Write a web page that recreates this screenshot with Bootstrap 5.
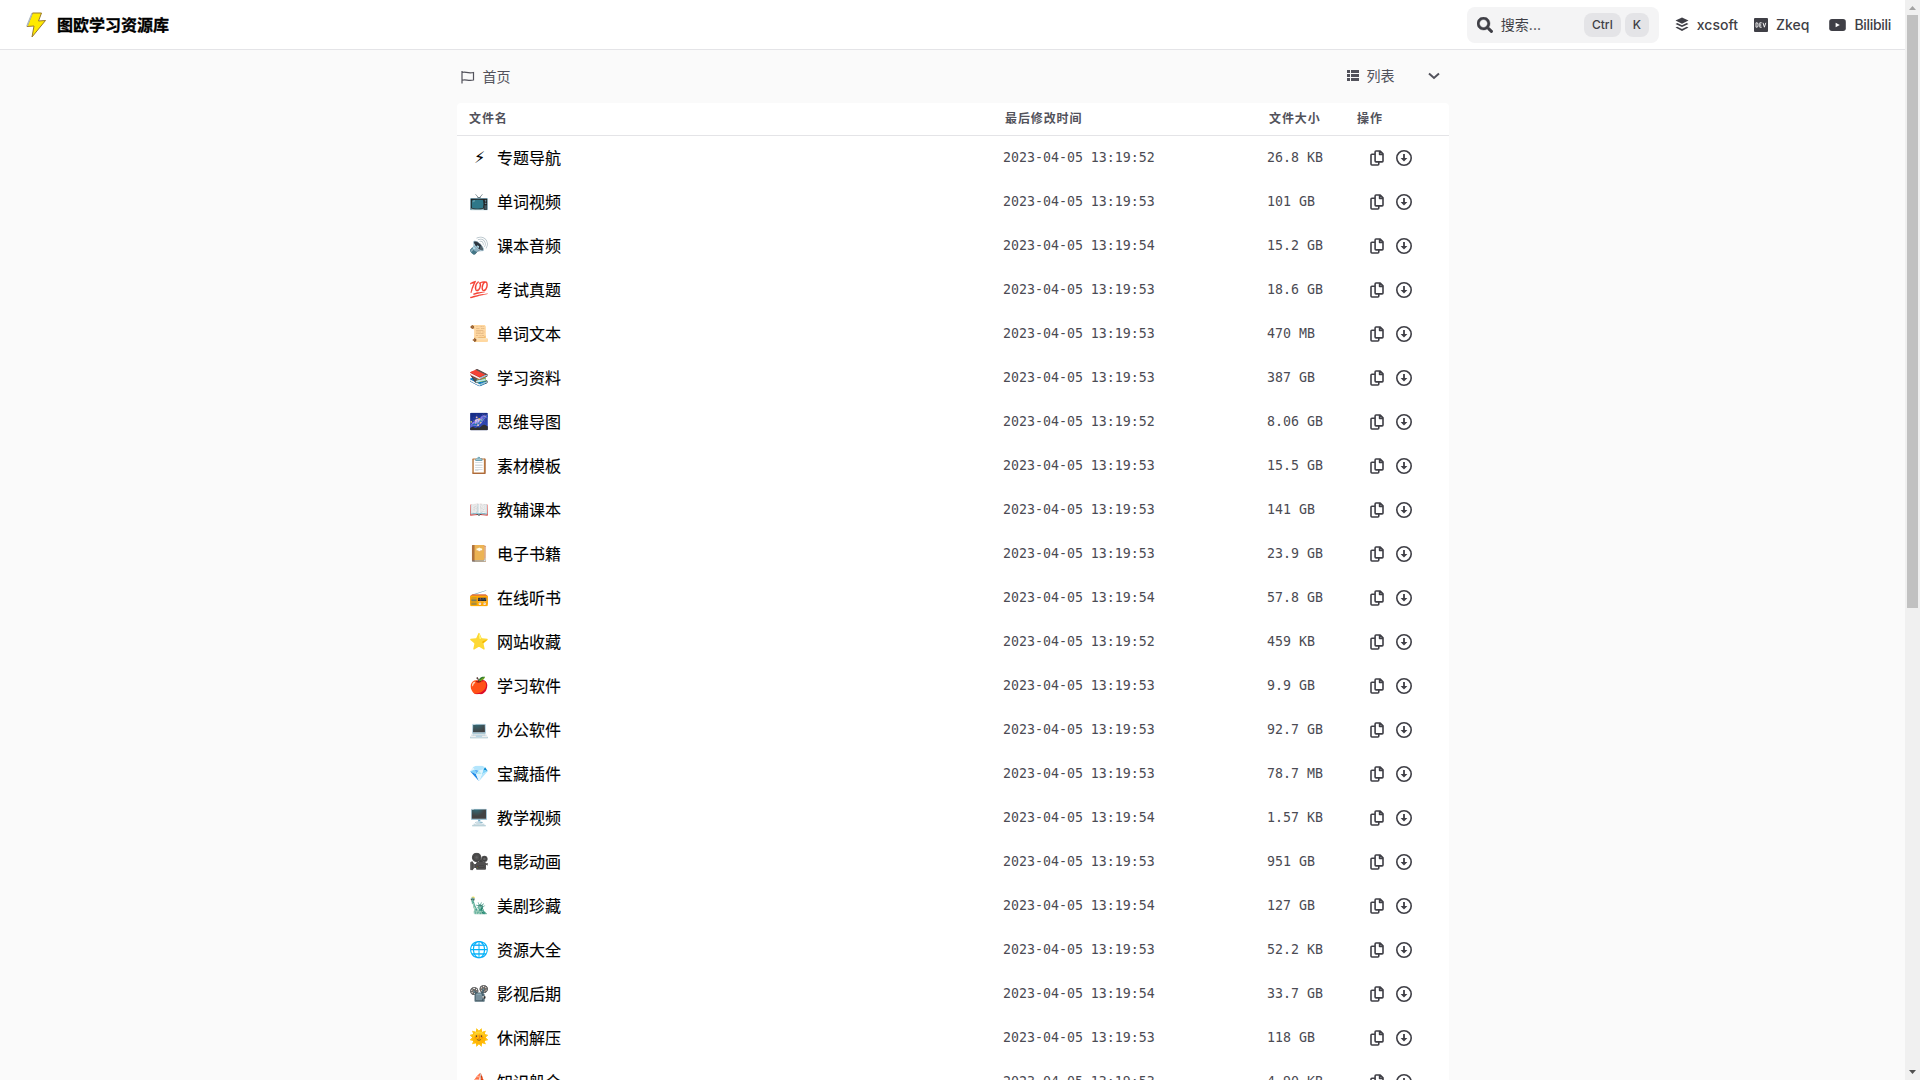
<!DOCTYPE html>
<html lang="zh-CN">
<head>
<meta charset="utf-8">
<title>图欧学习资源库</title>
<meta name="viewport" content="width=device-width, initial-scale=1">
<link href="https://cdn.jsdelivr.net/npm/bootstrap@5.3.0/dist/css/bootstrap.min.css" rel="stylesheet">
<style>
body{font-family:Inter,"Noto Sans CJK SC",sans-serif;background:#fafafa;color:#3f3f46;height:100vh}
svg{display:block;flex:none}
.topbar{height:50px;background:#fff;border-bottom:1px solid #e4e4e7;padding:0 16px 0 25px!important}
.site-title{font-size:16px;font-weight:700;color:#000;line-height:24px;margin-left:10px;-webkit-text-stroke:.3px #000}
.search-box{width:192px;height:36px;border-radius:8px;background:#f4f4f5;padding:0 10px;font-size:14px}
.key{height:24px;border-radius:8px;background:#e4e4e7;font-size:12px;font-weight:500;line-height:24px;text-align:center}
.social{font-size:14px;font-weight:500;line-height:20px}
.tight{letter-spacing:-.3px}
.site-main{width:992px;margin:0 auto}
.crumbs{height:53px;font-size:14px;color:#52525b;padding:0 8px 0 4px}
.layout-pick{padding-bottom:2px}
.layout-pick .chev{margin-left:32px}
.file-panel{background:#fff;border-radius:4px 4px 0 0}
.file-head{height:33px;border-bottom:1px solid #e4e4e7;font-size:12px;font-weight:700;color:#52525b;letter-spacing:.9px}
.file-head .c-time,.file-head .c-size{padding-left:2px}
.file-row{height:44px}
.c-name{width:546.5px;padding-left:12.5px}
.c-time{width:264px}
.c-size{width:90px}
.file-name{font-size:16px;font-weight:400;color:#000}
.emo{width:20px;margin-right:8px;font:16px/20px "Noto Color Emoji",sans-serif;text-align:center;color:#000;white-space:nowrap}
.num{font-family:"DejaVu Sans Mono",monospace;font-size:13.28px;color:#4b4b53}
.acts{padding-left:11.5px;gap:11px}
.rail{width:15px;background:#f0f0f0}
.rail-thumb{width:11px;height:593px;background:#c1c1c1;margin:0 2px}
.file-name{-webkit-text-stroke:.12px #000}
</style>
<script src="https://cdn.jsdelivr.net/npm/bootstrap@5.3.0/dist/js/bootstrap.bundle.min.js"></script>
</head>
<body class="d-flex overflow-hidden">
<svg width="0" height="0" class="position-absolute">
<symbol id="copy" viewBox="0 0 16 16"><path d="M7 1h4.200L14 3.800V11a.9.9 0 0 1-.9.9H7a.9.9 0 0 1-.9-.9V1.900A.9.9 0 0 1 7 1zM10.600 1v3.400H14M6 4.200H2.900a.9.9 0 0 0-.9.9v9a.9.9 0 0 0 .9.9h6a.9.9 0 0 0 .9-.9V12" fill="none" stroke="currentColor" stroke-width="1.600" stroke-linejoin="round"/></symbol>
<symbol id="down" viewBox="0 0 16 16"><circle cx="8" cy="8" r="7.200" fill="none" stroke="currentColor" stroke-width="1.600"/><path d="M7.100 4h1.800v4h2.500L8 11.500 4.600 8h2.500z" fill="currentColor"/></symbol>
</svg>
<div class="flex-grow-1 overflow-hidden">
<nav class="navbar topbar d-flex flex-nowrap justify-content-between">
<a class="d-flex align-items-center text-decoration-none" href="#">
<svg width="22" height="26" viewBox="0 0 22 26"><path d="M7.500 1h9l-3 8 7-.5L7 25l2-11-7 .500z" fill="#ffea00" stroke="#9b7a2c" stroke-width="1"/><path d="M7 1.500 2 14" stroke="#aebac5" stroke-width="1.500"/></svg>
<span class="site-title">图欧学习资源库</span></a>
<div class="d-flex align-items-center social">
<div class="search-box d-flex align-items-center">
<svg width="16" height="16" viewBox="0 0 512 512"><path fill="currentColor" stroke="currentColor" stroke-width="12" d="M505 442.700L405.300 343c-4.500-4.500-10.600-7-17-7H372c27.600-35.300 44-79.700 44-128C416 93.100 322.900 0 208 0S0 93.100 0 208s93.100 208 208 208c48.300 0 92.700-16.400 128-44v16.300c0 6.400 2.500 12.500 7 17l99.700 99.700c9.400 9.400 24.600 9.400 33.900 0l28.300-28.300c9.400-9.400 9.400-24.600.1-34zM208 336c-70.700 0-128-57.200-128-128 0-70.700 57.200-128 128-128 70.700 0 128 57.200 128 128 0 70.700-57.200 128-128 128z"/></svg>
<span class="ms-2 flex-grow-1 fw-normal">搜索...</span><span class="key" style="width:37px">Ctrl</span><span class="key ms-1" style="width:24px">K</span></div>
<a class="d-flex align-items-center text-reset text-decoration-none ms-3" href="#"><svg width="14" height="15" viewBox="0 0 14 15"><g fill="currentColor"><path d="M7 .5 13.500 3.600 7 6.700.5 3.600z"/><path d="M2.300 6 7 8.200 11.700 6l1.800.9L7 10 .5 6.900zM2.300 9.700 7 11.900l4.700-2.200 1.800.9L7 13.900.5 10.600z"/></g></svg><span class="ms-2">xcsoft</span></a>
<a class="d-flex align-items-center text-reset text-decoration-none ms-3" href="#"><svg width="14" height="14" viewBox="0 0 14 14"><rect width="14" height="14" rx="1" fill="currentColor"/><path d="M2 4.800v4.400h.8q1.200 0 1.200-1.200V6q0-1.200-1.200-1.200zM7.700 4.800H5.800v4.400h1.900M5.800 7h1.500M9 4.800l1.400 4.400 1.400-4.400" fill="none" stroke="#fff" stroke-width=".9"/></svg><span class="ms-2">Zkeq</span></a>
<a class="d-flex align-items-center text-reset text-decoration-none ms-3 ps-1" href="#"><svg width="17" height="12" viewBox="0 0 18 13"><rect width="18" height="13" rx="3" fill="currentColor"/><path d="M7 4v5l4.500-2.500z" fill="#fff"/></svg><span class="ms-2 tight" style="margin-right:-2px">Bilibili</span></a>
</div></nav>
<main class="site-main">
<div class="crumbs d-flex align-items-center justify-content-between">
<div class="d-flex align-items-center"><svg width="14" height="14" viewBox="0 0 14 14"><path d="M1 1v12.500M1 2.500c3-1.500 5 1.200 11.500 0v7.500C7 11.500 5 8.800 1 10.200" fill="none" stroke="currentColor" stroke-width="1.200"/></svg><span class="ms-2">首页</span></div>
<div class="layout-pick d-flex align-items-center"><svg width="12" height="11" viewBox="0 0 12 11"><path d="M0 0h3v3H0zM4 0h8v3H4zM0 4h3v3H0zM4 4h8v3H4zM0 8h3v3H0zM4 8h8v3H4z" fill="currentColor"/></svg><span class="ms-2">列表</span><svg class="chev" width="14" height="10" viewBox="0 0 14 10"><path d="m2 2.500 5 4.500 5-4.500" fill="none" stroke="currentColor" stroke-width="2"/></svg></div>
</div>
<section class="file-panel">
<div class="file-head d-flex align-items-center"><div class="c-name">文件名</div><div class="c-time">最后修改时间</div><div class="c-size">文件大小</div><div>操作</div></div>
<div id="files"></div>
</section>
</main>
</div>
<aside class="rail d-flex flex-column">
<svg width="15" height="15" viewBox="0 0 15 15"><path d="M4 10h7L7.500 6z" fill="#a3a3a3"/></svg><div class="rail-thumb"></div>
<svg class="mt-auto" width="15" height="15" viewBox="0 0 15 15"><path d="M4 5h7L7.500 9z" fill="#505050"/></svg>
</aside>
<script>
const files=[["⚡︎","专题导航",52,"26.8 KB"],["📺","单词视频",53,"101 GB"],["🔊","课本音频",54,"15.2 GB"],["💯","考试真题",53,"18.6 GB"],["📜","单词文本",53,"470 MB"],["📚","学习资料",53,"387 GB"],["🌌","思维导图",52,"8.06 GB"],["📋","素材模板",53,"15.5 GB"],["📖","教辅课本",53,"141 GB"],["📔","电子书籍",53,"23.9 GB"],["📻","在线听书",54,"57.8 GB"],["⭐","网站收藏",52,"459 KB"],["🍎","学习软件",53,"9.9 GB"],["💻","办公软件",53,"92.7 GB"],["💎","宝藏插件",53,"78.7 MB"],["🖥️","教学视频",54,"1.57 KB"],["🎥","电影动画",53,"951 GB"],["🗽","美剧珍藏",54,"127 GB"],["🌐","资源大全",53,"52.2 KB"],["📽️","影视后期",54,"33.7 GB"],["🌞","休闲解压",53,"118 GB"],["⛵","知识船仓",53,"4.90 KB"]];
document.getElementById("files").innerHTML=files.map(([e,n,s,z])=>`<div class="file-row d-flex align-items-center"><div class="c-name d-flex align-items-center"><span class="emo">${e}</span><span class="file-name">${n}</span></div><div class="c-time num">2023-04-05 13:19:${s}</div><div class="c-size num">${z}</div><div class="acts d-flex"><svg width="16" height="16"><use href="#copy"/></svg><svg width="16" height="16"><use href="#down"/></svg></div></div>`).join("");
</script>
</body>
</html>
